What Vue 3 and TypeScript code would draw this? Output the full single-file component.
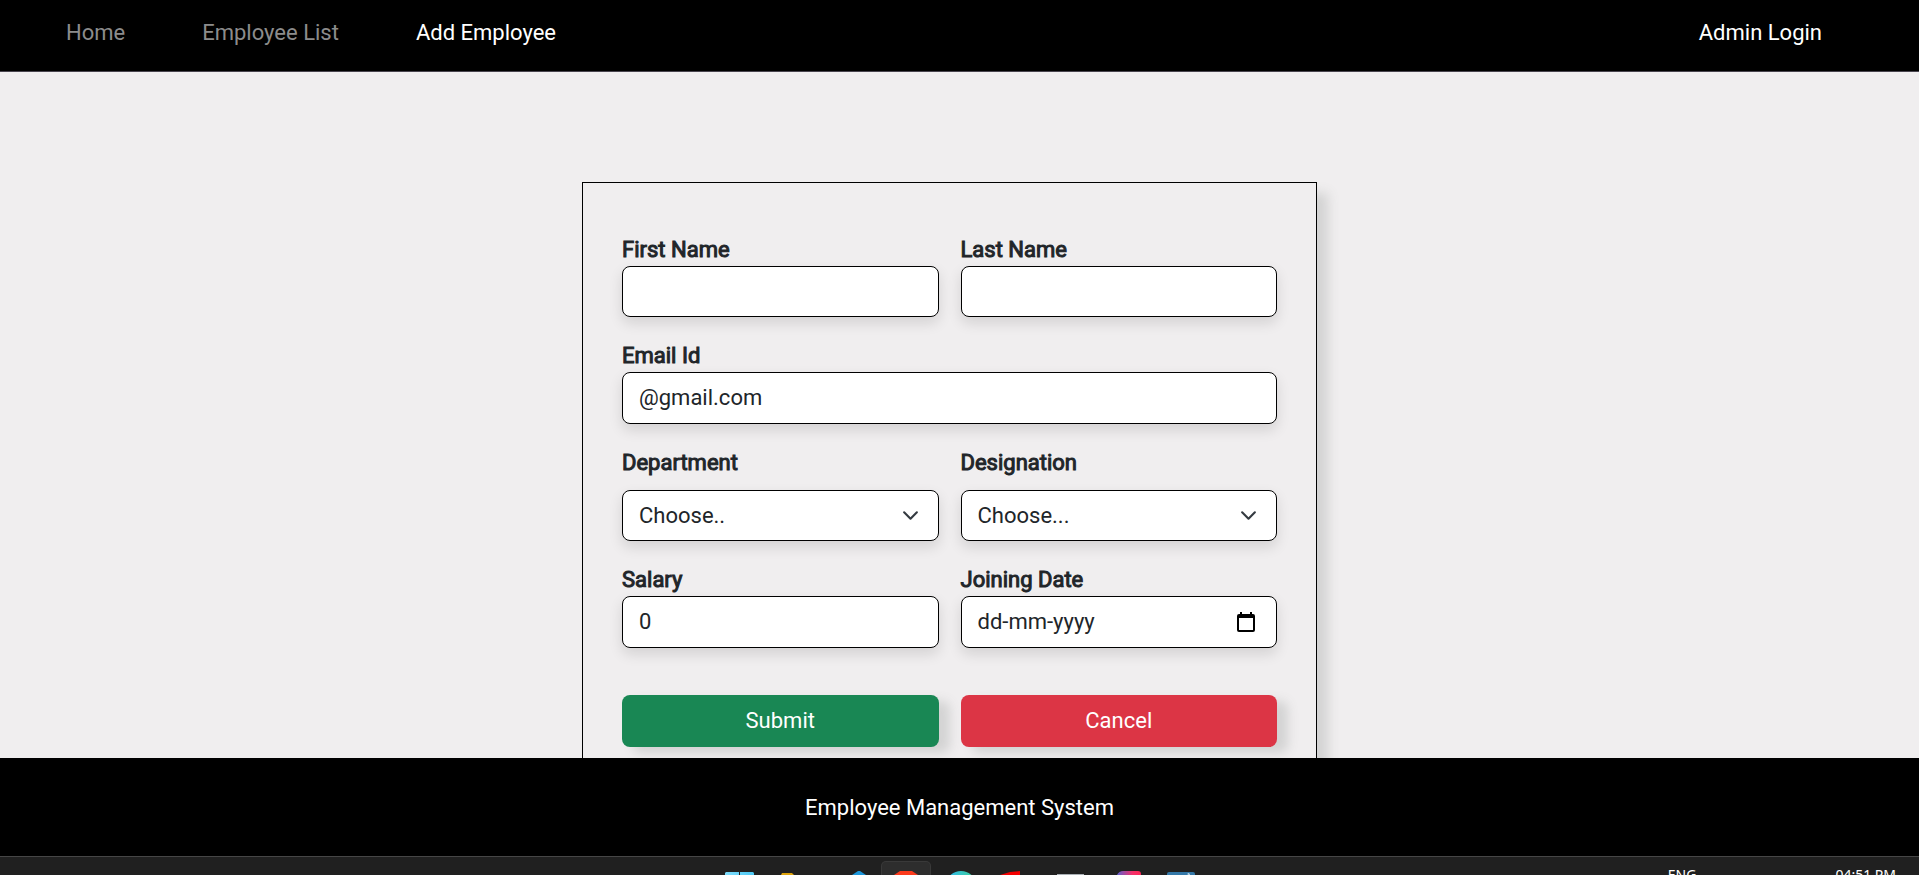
<script setup lang="ts">
import { reactive, ref } from 'vue'

interface NavLink {
  label: string
  href: string
  active: boolean
}

const links: NavLink[] = [
  { label: 'Home', href: '#home', active: false },
  { label: 'Employee List', href: '#employees', active: false },
  { label: 'Add Employee', href: '#add', active: true },
]

const blank = () => ({
  firstName: '',
  lastName: '',
  email: '@gmail.com',
  department: '',
  designation: '',
  salary: '0',
  joiningDate: '',
})

const form = reactive(blank())
const pickingDate = ref(false)

function cancel(): void {
  Object.assign(form, blank())
}
</script>

<template>
  <div class="page">
    <header class="topbar">
      <nav class="nav">
        <a
          v-for="link in links"
          :key="link.label"
          :href="link.href"
          class="nav-link"
          :class="{ active: link.active }"
        >{{ link.label }}</a>
      </nav>
      <a href="#login" class="nav-link active">Admin Login</a>
    </header>

    <main class="content">
      <form class="card" @submit.prevent>
        <div class="field">
          <label for="first-name">First Name</label>
          <input id="first-name" v-model="form.firstName" class="control slim" type="text" />
        </div>
        <div class="field">
          <label for="last-name">Last Name</label>
          <input id="last-name" v-model="form.lastName" class="control slim" type="text" />
        </div>
        <div class="field wide">
          <label for="email">Email Id</label>
          <input id="email" v-model="form.email" class="control" type="text" />
        </div>
        <div class="field spaced">
          <label for="department">Department</label>
          <div class="control-wrap">
            <select id="department" v-model="form.department" class="control slim select">
              <option value="">Choose..</option>
              <option>Engineering</option>
              <option>Finance</option>
            </select>
            <svg class="chevron" viewBox="0 0 16 16" aria-hidden="true">
              <path d="m2 5 6 6 6-6" fill="none" stroke="#343a40" stroke-width="2" stroke-linecap="round" stroke-linejoin="round" />
            </svg>
          </div>
        </div>
        <div class="field spaced">
          <label for="designation">Designation</label>
          <div class="control-wrap">
            <select id="designation" v-model="form.designation" class="control slim select">
              <option value="">Choose...</option>
              <option>Manager</option>
              <option>Developer</option>
            </select>
            <svg class="chevron" viewBox="0 0 16 16" aria-hidden="true">
              <path d="m2 5 6 6 6-6" fill="none" stroke="#343a40" stroke-width="2" stroke-linecap="round" stroke-linejoin="round" />
            </svg>
          </div>
        </div>
        <div class="field">
          <label for="salary">Salary</label>
          <input id="salary" v-model="form.salary" class="control" type="text" inputmode="numeric" />
        </div>
        <div class="field">
          <label for="joining-date">Joining Date</label>
          <div class="control-wrap">
            <input
              id="joining-date"
              v-model="form.joiningDate"
              class="control"
              :type="pickingDate ? 'date' : 'text'"
              placeholder="dd-mm-yyyy"
              @focus="pickingDate = true"
              @blur="pickingDate = false"
            />
            <svg v-if="!pickingDate" class="calendar" viewBox="0 0 18 20" aria-hidden="true">
              <path d="M3 0h2v2h8V0h2v2h1a2 2 0 0 1 2 2v14a2 2 0 0 1-2 2H2a2 2 0 0 1-2-2V4a2 2 0 0 1 2-2h1zM2 6v12h14V6z" fill="#000" fill-rule="evenodd" />
            </svg>
          </div>
        </div>
        <button class="btn submit" type="submit">Submit</button>
        <button class="btn cancel" type="button" @click="cancel">Cancel</button>
      </form>
    </main>

    <footer class="footer">Employee Management System</footer>

    <div class="taskbar">
      <svg class="apps" width="470" height="18" viewBox="0 0 470 18" aria-hidden="true">
        <defs>
          <linearGradient id="win" x1="0" x2="1"><stop offset="0" stop-color="#7fdcfb" /><stop offset="1" stop-color="#4cc8f4" /></linearGradient>
          <linearGradient id="edge" x1="0" x2="1"><stop offset="0" stop-color="#2fb9ee" /><stop offset="1" stop-color="#3fcf9a" /></linearGradient>
          <linearGradient id="ide" x1="0" x2="1"><stop offset="0" stop-color="#5b5fd0" /><stop offset=".65" stop-color="#f4316a" /><stop offset="1" stop-color="#fe2857" /></linearGradient>
        </defs>
        <path d="M1 15h13v14H0V16zM15 15h13l1 1v13H15z" fill="url(#win)" />
        <path d="M56 18l1-2h10l2 2z" fill="#dea30c" />
        <path d="M127 18l6-4 2 0 6 4z" fill="#1c97dc" />
        <rect x="156" y="4" width="50" height="30" rx="5" fill="#393939" />
        <rect x="157" y="5" width="48" height="30" rx="4" fill="#2d2d2d" />
        <path d="M169 18l3-2 3-2h12l3 2 3 2z" fill="#fb3a1c" />
        <ellipse cx="236" cy="26" rx="14" ry="12" fill="url(#edge)" />
        <path d="M275 18l10-3 10-1v4z" fill="#f40000" />
        <path d="M332 17h27v1h-27z" fill="#aab0b5" />
        <path d="M392 18q2-4 6-4h15q3 0 3 3v1z" fill="url(#ide)" />
        <path d="M442 18v-1q0-2 2-2h24q2 0 2 2v1z" fill="#3478a8" />
        <path d="M462 17l2-1 1 2h-1z" fill="#d8e9f3" />
      </svg>
      <div class="tray">
        <span>ENG</span>
        <span>04:51 PM</span>
      </div>
    </div>
  </div>
</template>

<style>
body {
  margin: 0;
  background: #f0eeef;
}
</style>

<style scoped>
.page {
  display: flex;
  flex-direction: column;
  height: 100vh;
  overflow: hidden;
  color: #212529;
  background: #f0eeef;
  font: 22px/33px Roboto, "Liberation Sans", sans-serif;
}

.page *,
.page *::before {
  box-sizing: border-box;
}

.topbar {
  display: flex;
  flex: none;
  justify-content: space-between;
  padding: 16px 97px 22px 66px;
  border-bottom: 1px solid #49454f;
  background: #000;
}

.nav {
  display: flex;
  gap: 77px;
}

.nav-link {
  color: #8c8c8c;
  text-decoration: none;
}

.nav-link.active {
  color: #fff;
}

.content {
  flex: 1;
  min-height: 0;
  overflow: hidden;
  padding: 110px 20px 0 0;
}

.card {
  display: grid;
  grid-template-columns: 1fr 1fr;
  gap: 22px;
  max-width: 735px;
  margin: 0 auto;
  padding: 50px 39px;
  border: 1px solid #000;
  box-shadow: 11px 11px 11px #d3d3d3;
  background: #f0eeef;
}

.field {
  display: flex;
  flex-direction: column;
  min-width: 0;
}

.field.wide {
  grid-column: 1 / -1;
}

.field.spaced {
  gap: 11px;
}

.field label {
  -webkit-text-stroke: 1px #212529;
}

.control-wrap {
  position: relative;
}

.control {
  display: block;
  width: 100%;
  height: 52px;
  margin: 0;
  padding: 0 16px 2px;
  border: 1px solid #000;
  border-radius: 8px;
  outline: none;
  color: #212529;
  background: #fff;
  font: inherit;
  box-shadow: 0 6px 14px rgba(0, 0, 0, 0.12);
}

.control::placeholder {
  color: #212529;
  opacity: 1;
}

.slim {
  height: 51px;
}

.select {
  padding-bottom: 0;
  appearance: none;
}

.chevron {
  position: absolute;
  top: 17px;
  right: 20px;
  width: 17px;
  height: 17px;
  pointer-events: none;
}

.calendar {
  position: absolute;
  top: 16px;
  right: 22px;
  width: 18px;
  height: 20px;
  pointer-events: none;
}

.btn {
  height: 52px;
  margin: 25px 0 0;
  padding: 0 0 2px;
  border: 0;
  border-radius: 8px;
  color: #fff;
  font: inherit;
  cursor: pointer;
  box-shadow: 11px 6px 11px #d3d3d3;
}

.submit {
  background: #198754;
}

.cancel {
  background: #dc3545;
}

.footer {
  position: relative;
  flex: none;
  padding: 33px 0 32px;
  color: #fff;
  background: #000;
  text-align: center;
}

.taskbar {
  display: grid;
  flex: none;
  grid-template-columns: 1fr auto 1fr;
  height: 19px;
  overflow: hidden;
  border-top: 1px solid #464646;
  color: #fff;
  background: #202020;
  font: 14px/20px "Noto Sans", "Open Sans", sans-serif;
}

.apps {
  display: block;
  grid-column: 2;
}

.tray {
  display: flex;
  gap: 139px;
  justify-content: flex-end;
  padding: 8px 23px 0 0;
}
</style>
